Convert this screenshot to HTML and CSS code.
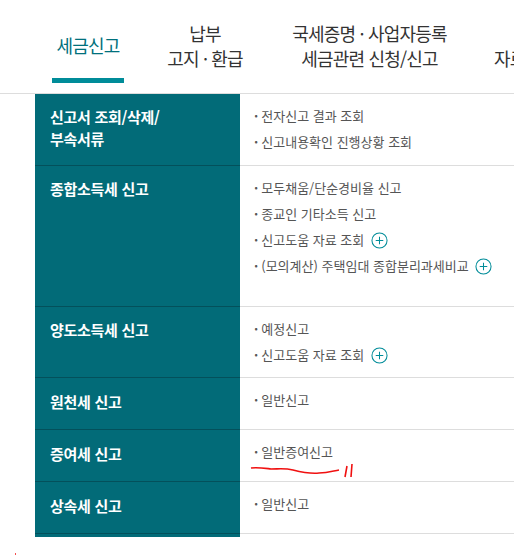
FILE: index.html
```html
<!DOCTYPE html>
<html lang="ko">
<head>
    <meta charset="UTF-8">
    <title>세금신고</title>
    <link rel="stylesheet" href="styles.css">
</head>
<body>
    <div class="page">
        <div class="nav">
            <div class="tab tab-active"><span>세금신고</span></div>
            <div class="tab tab-pay">납부<br>고지 · 환급</div>
            <div class="tab tab-cert">국세증명 · 사업자등록<br>세금관련 신청/신고</div>
            <div class="tab tab-data"><br>자료</div>
        </div>

        <div class="menu">
            <div class="row row-1">
                <div class="title">신고서 조회/삭제/<br>부속서류</div>
                <ul class="links">
                    <li>전자신고 결과 조회</li>
                    <li>신고내용확인 진행상황 조회</li>
                </ul>
            </div>
            <div class="row row-2">
                <div class="title">종합소득세 신고</div>
                <ul class="links">
                    <li>모두채움/단순경비율 신고</li>
                    <li>종교인 기타소득 신고</li>
                    <li>신고도움 자료 조회 <svg class="plus" viewBox="0 0 18 18"><circle cx="9" cy="9" r="8"/><path d="M5 9h8M9 5v8"/></svg></li>
                    <li class="long">(모의계산) 주택임대 종합분리과세비교 <svg class="plus" viewBox="0 0 18 18"><circle cx="9" cy="9" r="8"/><path d="M5 9h8M9 5v8"/></svg></li>
                </ul>
            </div>
            <div class="row row-3">
                <div class="title">양도소득세 신고</div>
                <ul class="links">
                    <li>예정신고</li>
                    <li>신고도움 자료 조회 <svg class="plus" viewBox="0 0 18 18"><circle cx="9" cy="9" r="8"/><path d="M5 9h8M9 5v8"/></svg></li>
                </ul>
            </div>
            <div class="row row-4">
                <div class="title">원천세 신고</div>
                <ul class="links">
                    <li>일반신고</li>
                </ul>
            </div>
            <div class="row row-4">
                <div class="title">증여세 신고</div>
                <ul class="links">
                    <li>일반증여신고</li>
                </ul>
            </div>
            <div class="row row-4">
                <div class="title">상속세 신고</div>
                <ul class="links">
                    <li>일반신고</li>
                </ul>
            </div>
            <div class="menu-end"></div>
        </div>

        <!-- red pen marks on top of the screenshot -->
        <svg class="pen" width="514" height="555" viewBox="0 0 514 555">
            <path d="M251 468c6-1 12 0 20 1 8 0 14-1 22 1 8 2 16 4 26 3 9 0 14-2 20-3" />
            <path d="M347 466l-2 11M352 464l-1 13" />
            <path d="M15 554h1" />
        </svg>
    </div>
</body>
</html>
```

FILE: styles.css
```css
body {
    margin: 0;
    font-family: "Noto Sans CJK KR", "Noto Sans", sans-serif;
    background-color: #fff;
}
.page {
    position: relative;
    width: 514px;
    height: 555px;
    overflow: hidden;
}
.nav {
    display: flex;
    height: 93px;
    border-bottom: 1px solid #ddd;
    white-space: nowrap;
}
.tab {
    flex: none;
    box-sizing: border-box;
    padding-top: 21px;
    font-size: 18px;
    line-height: 25px;
    letter-spacing: -0.8px;
    text-align: center;
    color: #333;
}
.tab-active {
    width: 72px;
    height: 83px;
    margin-left: 52px;
    padding-top: 33px;
    color: #00707c;
    border-bottom: 5px solid #008c99;
}
.tab-pay {
    width: 78px;
    margin-left: 42px;
}
.tab-cert {
    width: 157px;
    margin-left: 47px;
}
.tab-data {
    margin-left: 46px;
}
.menu {
    margin-left: 35px;
}
.row {
    box-sizing: border-box;
    display: flex;
    border-bottom: 1px solid #ddd;
}
.row-1 { height: 72px; }
.row-2 { height: 141px; }
.row-3 { height: 71px; }
.row-4 { height: 52px; }
.title {
    box-sizing: border-box;
    flex: none;
    width: 205px;
    margin-bottom: -1px;
    padding: 12px 15px 0;
    background-color: #026b78;
    border-bottom: 1px solid #03505b;
    color: #fff;
    font-size: 15px;
    font-weight: 700;
    line-height: 22px;
    letter-spacing: -0.3px;
}
.row-4 .title {
    padding-top: 13px;
}
.links {
    list-style: none;
    margin: 0;
    padding: 9px 0 0 14px;
    font-size: 13px;
    line-height: 26px;
    color: #555;
}
.row-4 .links {
    padding-top: 9px;
}
.links li::before {
    content: "·";
    margin-right: 3px;
    font-weight: 700;
}
.long {
    width: 250px;
}
.plus {
    width: 17px;
    height: 17px;
    margin-left: 3px;
    vertical-align: -4px;
    fill: none;
    stroke: #008c99;
    stroke-width: 1.1;
}
.menu-end {
    width: 205px;
    height: 3px;
    background-color: #026b78;
}
.pen {
    position: absolute;
    left: 0;
    top: 0;
    fill: none;
    stroke: #f01010;
    stroke-width: 1.6;
}
```
